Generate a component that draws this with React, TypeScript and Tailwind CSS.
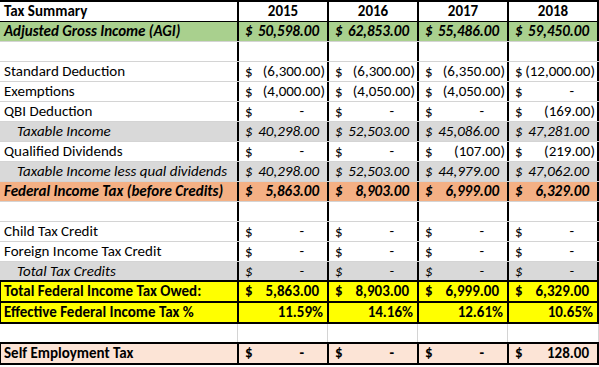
import React from "react";

type Kind = "money" | "pct" | "year" | "none";
type RowDef = {
  label: string;
  labelCls?: string;
  valCls?: string;
  bg?: string;
  values?: string[];
  kind: Kind;
  rowCls?: string;
  grayV?: boolean;
  leftBorder?: boolean;
};

const G = "border-b border-b-[#d4d4d4]";

const rows: RowDef[] = [
  { label: "Tax Summary", labelCls: "font-bold pl-[4px]", kind: "year", values: ["2015", "2016", "2017", "2018"], rowCls: "h-[22px] border-t-2 border-t-black border-b border-b-black", bg: "bg-white" },
  { label: "Adjusted Gross Income (AGI)", labelCls: "font-bold italic pl-[4px]", valCls: "font-bold italic", kind: "money", values: ["50,598.00", "62,853.00", "55,486.00", "59,450.00"], bg: "bg-[#a9d08e]", rowCls: `h-[20px] ${G}` },
  { label: "", kind: "none", bg: "bg-white", rowCls: `h-[20px] ${G}` },
  { label: "Standard Deduction", labelCls: "pl-[4px]", kind: "money", values: ["(6,300.00)", "(6,300.00)", "(6,350.00)", "(12,000.00)"], bg: "bg-white", rowCls: `h-[20px] ${G}` },
  { label: "Exemptions", labelCls: "pl-[4px]", kind: "money", values: ["(4,000.00)", "(4,050.00)", "(4,050.00)", "-"], bg: "bg-white", rowCls: `h-[20px] ${G}` },
  { label: "QBI Deduction", labelCls: "pl-[4px]", kind: "money", values: ["-", "-", "-", "(169.00)"], bg: "bg-white", rowCls: `h-[20px] ${G}` },
  { label: "Taxable Income", labelCls: "italic pl-[17px]", valCls: "italic", kind: "money", values: ["40,298.00", "52,503.00", "45,086.00", "47,281.00"], bg: "bg-[#d9d9d9]", rowCls: `h-[20px] ${G}` },
  { label: "Qualified Dividends", labelCls: "pl-[4px]", kind: "money", values: ["-", "-", "(107.00)", "(219.00)"], bg: "bg-white", rowCls: `h-[20px] ${G}` },
  { label: "Taxable Income less qual dividends", labelCls: "italic pl-[17px]", valCls: "italic", kind: "money", values: ["40,298.00", "52,503.00", "44,979.00", "47,062.00"], bg: "bg-[#d9d9d9]", rowCls: `h-[20px] ${G}` },
  { label: "Federal Income Tax (before Credits)", labelCls: "font-bold italic pl-[4px]", valCls: "font-bold italic", kind: "money", values: ["5,863.00", "8,903.00", "6,999.00", "6,329.00"], bg: "bg-[#f4b084]", rowCls: `h-[20px] ${G}` },
  { label: "", kind: "none", bg: "bg-white", rowCls: `h-[20px] ${G}` },
  { label: "Child Tax Credit", labelCls: "pl-[4px]", kind: "money", values: ["-", "-", "-", "-"], bg: "bg-white", rowCls: `h-[20px] ${G}` },
  { label: "Foreign Income Tax Credit", labelCls: "pl-[4px]", kind: "money", values: ["-", "-", "-", "-"], bg: "bg-white", rowCls: `h-[20px] ${G}` },
  { label: "Total Tax Credits", labelCls: "italic pl-[17px]", valCls: "italic", kind: "money", values: ["-", "-", "-", "-"], bg: "bg-[#d9d9d9]", rowCls: "h-[20px] border-b-2 border-b-black" },
  { label: "Total Federal Income Tax Owed:", labelCls: "font-bold pl-[3px]", valCls: "font-bold", kind: "money", values: ["5,863.00", "8,903.00", "6,999.00", "6,329.00"], bg: "bg-[#ffff00]", rowCls: "h-[21px] border-b-2 border-b-black", leftBorder: true },
  { label: "Effective Federal Income Tax %", labelCls: "font-bold pl-[3px]", valCls: "font-bold", kind: "pct", values: ["11.59%", "14.16%", "12.61%", "10.65%"], bg: "bg-[#ffff00]", rowCls: "h-[21px] border-b-2 border-b-black", leftBorder: true },
  { label: "", kind: "none", bg: "bg-white", rowCls: "h-[20px] border-b-2 border-b-black", grayV: true },
  { label: "Self Employment Tax", labelCls: "font-bold pl-[3px]", valCls: "font-bold", kind: "money", values: ["-", "-", "-", "128.00"], bg: "bg-[#fce4d6]", rowCls: "h-[21px] border-b-2 border-b-black", leftBorder: true },
];

function ValueCell({ v, kind, cls }: { v?: string; kind: Kind; cls?: string }) {
  if (kind === "none" || v === undefined) return <div />;
  if (kind === "year") return <div className={`flex items-center justify-center font-bold ${cls ?? ""}`}>{v}</div>;
  if (kind === "pct") return <div className={`flex items-center justify-end pr-[4px] ${cls ?? ""}`}>{v}</div>;
  const neg = v.startsWith("(");
  const dash = v === "-";
  return (
    <div className={`flex items-center justify-between ${cls ?? ""}`}>
      <span className="pl-[6px]">$</span>
      <span className={dash ? "pr-[23px]" : neg ? "pr-[2px]" : "pr-[8px]"}>{v}</span>
    </div>
  );
}

export default function App() {
  return (
    <div
      className="w-[599px] h-[367px] bg-white text-black text-[15px] leading-none overflow-hidden"
      style={{ fontFamily: "Carlito, Calibri, Lato, 'Noto Sans', sans-serif" }}
    >
      {rows.map((r, i) => (
        <div key={i} className={`grid grid-cols-[237px_90px_90px_90px_92px] ${r.bg ?? ""} ${r.rowCls ?? ""}`}>
          <div className={`flex items-center whitespace-nowrap ${r.leftBorder ? "border-l border-l-black" : ""} ${r.labelCls ?? ""}`}>{r.label}</div>
          {[0, 1, 2, 3].map((c) => (
            <div
              key={c}
              className={`${r.grayV ? "border-l border-l-[#d4d4d4] pl-[1px]" : "border-l-2 border-l-black"} ${c === 3 ? (r.grayV ? "border-r border-r-[#d4d4d4] pr-[1px]" : "border-r-2 border-r-black") : ""} flex flex-col`}
            >
              <ValueCell v={r.values?.[c]} kind={r.kind} cls={`h-full ${r.valCls ?? ""}`} />
            </div>
          ))}
        </div>
      ))}
    </div>
  );
}
